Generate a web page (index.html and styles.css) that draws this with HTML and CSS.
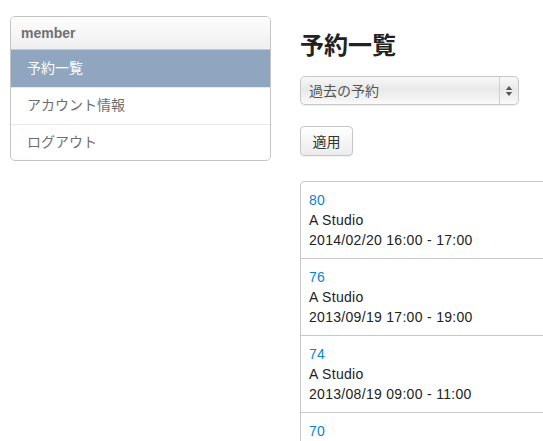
FILE: index.html
```html
<!DOCTYPE html>
<html lang="ja">
<head>
<meta charset="utf-8">
<title>予約一覧</title>
<link rel="stylesheet" href="styles.css">
</head>
<body>
<div class="page">
  <aside class="side">
    <div class="side-head">member</div>
    <a class="side-item active" href="#">予約一覧</a>
    <a class="side-item" href="#">アカウント情報</a>
    <a class="side-item" href="#">ログアウト</a>
  </aside>
  <main class="main">
    <h1 class="title">予約一覧</h1>
    <div class="select">
      <span class="select-text">過去の予約</span>
      <span class="select-arrows">
        <svg width="8" height="12" viewBox="0 0 8 12"><path d="M4 1 L7.2 5 L0.8 5 Z" fill="#555"/><path d="M4 11 L7.2 7 L0.8 7 Z" fill="#555"/></svg>
      </span>
    </div>
    <button class="btn" type="button">適用</button>
    <div class="list">
      <div class="row"><a class="num" href="#">80</a><div>A Studio</div><div>2014/02/20 16:00 - 17:00</div></div>
      <div class="row"><a class="num" href="#">76</a><div>A Studio</div><div>2013/09/19 17:00 - 19:00</div></div>
      <div class="row"><a class="num" href="#">74</a><div>A Studio</div><div>2013/08/19 09:00 - 11:00</div></div>
      <div class="row"><a class="num" href="#">70</a></div>
    </div>
  </main>
</div>
</body>
</html>
```
FILE: styles.css
```css
html, body {
  margin: 0;
  padding: 0;
  overflow: hidden;
  background: #fff;
}
body {
  font-family: "Liberation Sans", "Noto Sans CJK JP", sans-serif;
  font-size: 14px;
  line-height: 20px;
  color: #333;
}
.page {
  display: flex;
  align-items: flex-start;
  padding: 16px 0 0 10px;
  gap: 29px;
}
.side {
  width: 259px;
  flex: none;
  border: 1px solid #c4c4c4;
  border-radius: 5px;
  overflow: hidden;
  display: flex;
  flex-direction: column;
}
.side-head {
  height: 32px;
  line-height: 32px;
  padding-left: 10px;
  font-weight: bold;
  color: #707070;
  background: linear-gradient(#fdfdfd, #efefef);
  border-bottom: 1px solid #c9c9c9;
}
.side-item {
  display: block;
  height: 36px;
  line-height: 34px;
  padding-left: 16px;
  color: #6e6e6e;
  text-decoration: none;
  border-top: 1px solid #e8e8e8;
}
.side-item.active {
  border-top: none;
  height: 37px;
  line-height: 36px;
  background: #8fa5c0;
  color: #fff;
}
.side-item:last-child {
  height: 35px;
}
.main {
  width: 280px;
  flex: none;
  display: flex;
  flex-direction: column;
  align-items: flex-start;
}
.title {
  margin: 15px 0 0 0;
  font-size: 24px;
  line-height: 30px;
  font-weight: bold;
  color: #222;
}
.select {
  margin-top: 15px;
  width: 217px;
  height: 27px;
  border: 1px solid #c8c8c8;
  border-radius: 5px;
  background: linear-gradient(#f8f8f8, #e9e9e9 45%, #f4f4f4 85%, #fbfbfb);
  box-shadow: 0 1px 1px rgba(0,0,0,0.08);
  display: flex;
  align-items: center;
  color: #555;
}
.select-text {
  flex: 1;
  padding-left: 8px;
}
.select-arrows {
  width: 18px;
  height: 27px;
  border-left: 1px solid #d0d0d0;
  display: flex;
  align-items: center;
  justify-content: center;
}
.btn {
  margin-top: 21px;
  width: 53px;
  height: 30px;
  padding: 0;
  border: 1px solid #c6c6c6;
  border-radius: 4px;
  background: linear-gradient(#ffffff, #ececec);
  box-shadow: 0 1px 1px rgba(0,0,0,0.06);
  font-family: "Liberation Sans", "Noto Sans CJK JP", sans-serif;
  font-size: 14px;
  color: #333;
}
.list {
  margin-top: 25px;
  width: 300px;
  border: 1px solid #c8c8c8;
  border-radius: 4px 0 0 0;
}
.row {
  padding: 8px 8px;
  border-top: 1px solid #c8c8c8;
  letter-spacing: 0.3px;
  color: #222;
}
.row:first-child {
  border-top: none;
}
.num {
  display: block;
  color: #0a84cc;
  text-decoration: none;
}
```
